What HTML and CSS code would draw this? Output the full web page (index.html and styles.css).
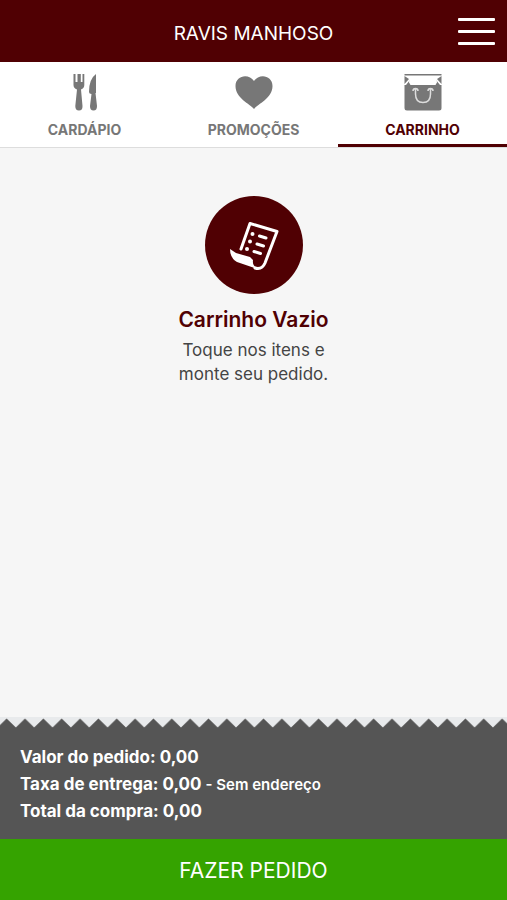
FILE: index.html
```html
<!DOCTYPE html>
<html lang="pt-BR">
<head>
<meta charset="UTF-8">
<meta name="viewport" content="width=device-width, initial-scale=1">
<title>Ravis Manhoso</title>
<link rel="stylesheet" href="styles.css">
</head>
<body>
<header class="topo">
  <h1>RAVIS MANHOSO</h1>
  <button class="menu" type="button" aria-label="Abrir menu">
    <span></span>
    <span></span>
    <span></span>
  </button>
</header>

<nav class="abas">
  <a class="aba" href="#cardapio">
    <svg viewBox="0 0 38 38" aria-hidden="true">
      <path d="M7.500 1V12Q7.500 15 11 16.500L9.300 33Q9.300 37.500 13 37.500T16.500 33L15 16.500Q18.300 15 18.300 12V1H16.500V9H14.800V1H11.500V9H9.500V1Z"/>
      <path d="M30 1Q23 6 23 19Q23 21 25.500 21L24 33Q24 37.500 27.500 37.500T31 33L29.500 20H30Z"/>
    </svg>
    <span>CARDÁPIO</span>
  </a>
  <a class="aba" href="#promocoes">
    <svg viewBox="0 0 38 38" aria-hidden="true">
      <path d="M19 36C15 31 .5 25 .5 13C.5 2 14 0 19 8C24 0 37.500 2 37.500 13C37.500 25 23 31 19 36Z"/>
    </svg>
    <span>PROMOÇÕES</span>
  </a>
  <a class="aba ativa" href="#carrinho" aria-current="page">
    <svg viewBox="0 0 38 38" aria-hidden="true">
      <path d="M.5 12H37.500V35Q37.500 37.500 35 37.500H3Q.5 37.500 .5 35Z"/>
      <path d="M.5 1H37.500V2.500H.5Z"/>
      <path d="M.5 3L5 6L.5 11ZM37.500 3L33 6L37.500 11Z"/>
      <path d="M6 7L2 12H6.500L4.800 9ZM32 7L36 12H31.500L33.200 9Z"/>
      <path class="alca" d="M9 18Q9 15.500 11.500 15.500T14 18M24 18Q24 15.500 26.500 15.500T29 18M11.500 16V21Q11.500 29.500 19 29.500T26.500 21V16"/>
    </svg>
    <span>CARRINHO</span>
  </a>
</nav>

<main class="vazio">
  <div class="circulo">
    <svg viewBox="0 0 50 50" aria-hidden="true">
      <path class="folha" d="M12 29L21 3.500L48 11.500L36 43Q33 50 26 48"/>
      <path class="dobra" d="M1 29Q1 38 8 42L27 48.500Q31 49.500 30 48Q23 47 24 40L21 37L7 33Z"/>
      <path class="itens" d="M30.500 16L37 18M28 24L34.500 26M25 31.500L31.500 33.500"/>
      <circle cx="23.500" cy="14" r="2"/>
      <circle cx="21" cy="21.500" r="2"/>
      <circle cx="18" cy="29" r="2"/>
    </svg>
  </div>
  <h2>Carrinho Vazio</h2>
  <p>Toque nos itens e<br>monte seu pedido.</p>
</main>

<footer class="rodape">
  <svg class="serrilha" aria-hidden="true">
    <defs>
      <pattern id="dente" x="-2.500" width="18.350" height="11" patternUnits="userSpaceOnUse">
        <path d="M0 11V10.500L9.170 1.500L18.350 10.500V11Z"/>
      </pattern>
    </defs>
    <rect width="100%" height="11" fill="url(#dente)"/>
  </svg>
  <div class="resumo">
    <div>Valor do pedido: 0,00</div>
    <div>Taxa de entrega: 0,00 <small>- Sem endereço</small></div>
    <div>Total da compra: 0,00</div>
  </div>
  <button class="finalizar" type="button">FAZER PEDIDO</button>
</footer>
</body>
</html>
```
FILE: styles.css
```css
* {
  box-sizing: border-box;
}
body {
  margin: 0;
  min-height: 100vh;
  display: flex;
  flex-direction: column;
  background-color: #f6f6f6;
  color: #444;
  font-family: Inter, "Liberation Sans", sans-serif;
}
h1, h2, p {
  margin: 0;
}

/* topo */
.topo {
  display: grid;
  grid-template-columns: 1fr auto 1fr;
  align-items: center;
  height: 62px;
  padding: 0 12px;
  background-color: #500003;
  color: #fff;
}
.topo h1 {
  grid-column: 2;
  padding-top: 5px;
  font-size: 19px;
  line-height: 24px;
  font-weight: 400;
}
.menu {
  justify-self: end;
  display: flex;
  flex-direction: column;
  gap: 9px;
  padding: 0;
  border: 0;
  background: none;
  cursor: pointer;
}
.menu span {
  width: 37px;
  height: 3px;
  border-radius: 1px;
  background-color: #fff;
}

/* abas */
.abas {
  display: grid;
  grid-template-columns: repeat(3, 1fr);
  background-color: #fff;
  border-bottom: 1px solid #ddd;
}
.aba {
  display: flex;
  flex-direction: column;
  align-items: center;
  gap: 11px;
  padding-top: 11px;
  height: 85px;
  border-bottom: 3px solid transparent;
  color: #777;
  font-size: 14px;
  line-height: 16px;
  font-weight: 700;
  text-decoration: none;
}
.aba svg {
  width: 38px;
  height: 38px;
  fill: #777;
}
.aba .alca {
  fill: none;
  stroke: #ddd;
  stroke-width: 1.5;
}
.ativa {
  border-color: #500003;
  color: #500003;
}

/* carrinho vazio */
.vazio {
  flex: 1;
  display: flex;
  flex-direction: column;
  align-items: center;
  padding: 48px 20px;
  text-align: center;
}
.circulo {
  display: flex;
  align-items: center;
  justify-content: center;
  width: 98px;
  height: 98px;
  border-radius: 50%;
  background-color: #500003;
}
.circulo svg {
  width: 50px;
  height: 50px;
  fill: #fff;
}
.folha, .itens {
  fill: none;
  stroke: #fff;
  stroke-width: 3;
  stroke-linecap: round;
  stroke-linejoin: round;
}
.vazio h2 {
  margin-top: 10px;
  color: #500003;
  font-size: 21px;
  line-height: 32px;
  font-weight: 600;
}
.vazio p {
  margin-top: 2px;
  font-size: 17px;
  line-height: 24px;
}

/* rodape */
.serrilha {
  display: block;
  width: 100%;
  height: 11px;
  background-color: #e8eaec;
  fill: #555;
}
.resumo {
  padding: 16px 20px 14px;
  background-color: #555;
  color: #fff;
  font-size: 17px;
  line-height: 27px;
  font-weight: 700;
}
.resumo small {
  font-size: 15px;
  font-weight: 600;
}
.finalizar {
  display: block;
  width: 100%;
  height: 61px;
  padding: 2px 0 0;
  border: 0;
  background-color: #35a300;
  color: #fff;
  font-family: inherit;
  font-size: 21px;
  cursor: pointer;
}
```
